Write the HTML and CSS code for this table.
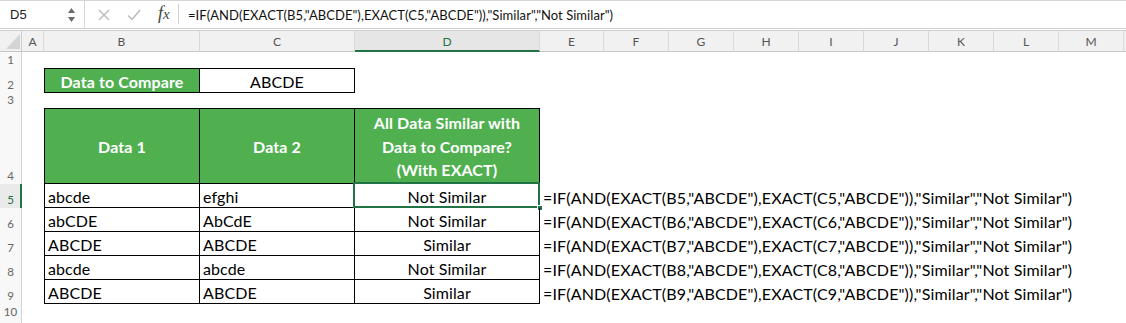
FILE: index.html
```html
<!DOCTYPE html>
<html>
<head>
<meta charset="utf-8">
<link rel="stylesheet" href="styles.css">
</head>
<body>
<div class="app">
  <div class="fbar">
    <div class="namebox">
      <span class="ref">D5</span>
      <svg class="spin" width="9" height="16" viewBox="0 0 9 16"><path d="M4.5 1 L8 6 L1 6 Z" fill="#6b6b6b"/><path d="M1 10 L8 10 L4.5 15 Z" fill="#6b6b6b"/></svg>
    </div>
    <div class="fbtns">
      <svg class="btn-x" width="14" height="14" viewBox="0 0 14 14"><path d="M2 2 L12 12 M12 2 L2 12" stroke="#b9b9b9" stroke-width="1.4" fill="none"/></svg>
      <svg class="btn-ok" width="14" height="12" viewBox="0 0 14 12"><path d="M1 6.5 L5 10.5 L13 1" stroke="#b9b9b9" stroke-width="1.4" fill="none"/></svg>
      <span class="fx"><i>f</i><i class="x">x</i></span>
    </div>
    <div class="formula">=IF(AND(EXACT(B5,"ABCDE"),EXACT(C5,"ABCDE")),"Similar","Not Similar")</div>
  </div>

  <div class="sheet">
    <!-- column headers -->
    <div class="corner"><svg width="14" height="15" viewBox="0 0 14 15"><path d="M14 0 L14 15 L0 15 Z" fill="#d4d4d4"/></svg></div>
    <div class="ch">A</div>
    <div class="ch">B</div>
    <div class="ch">C</div>
    <div class="ch active">D</div>
    <div class="ch">E</div>
    <div class="ch">F</div>
    <div class="ch">G</div>
    <div class="ch">H</div>
    <div class="ch">I</div>
    <div class="ch">J</div>
    <div class="ch">K</div>
    <div class="ch">L</div>
    <div class="ch">M</div>
    <div class="ch end"></div>

    <!-- row headers -->
    <div class="rh r1">1</div>
    <div class="rh r2">2</div>
    <div class="rh r3">3</div>
    <div class="rh r4">4</div>
    <div class="rh r5 active">5</div>
    <div class="rh r6">6</div>
    <div class="rh r7">7</div>
    <div class="rh r8">8</div>
    <div class="rh r9">9</div>
    <div class="rh r10">10</div>
    <div class="rh r11"></div>

    <!-- row 2 -->
    <div class="cell hd r2 cb top first">Data to Compare</div>
    <div class="cell r2 cc top center">ABCDE</div>

    <!-- row 4 -->
    <div class="cell hd r4 cb top first tall">Data 1</div>
    <div class="cell hd r4 cc top tall">Data 2</div>
    <div class="cell hd r4 cd top tall wrap">All Data Similar with<br>Data to Compare?<br>(With EXACT)</div>

    <!-- rows 5-9 -->
    <div class="cell r5 cb first">abcde</div>
    <div class="cell r5 cc">efghi</div>
    <div class="cell r5 cd center sel">Not Similar<span class="selbox"></span><span class="handle"></span></div>
    <div class="txt r5 ce">=IF(AND(EXACT(B5,"ABCDE"),EXACT(C5,"ABCDE")),"Similar","Not Similar")</div>

    <div class="cell r6 cb first">abCDE</div>
    <div class="cell r6 cc">AbCdE</div>
    <div class="cell r6 cd center">Not Similar</div>
    <div class="txt r6 ce">=IF(AND(EXACT(B6,"ABCDE"),EXACT(C6,"ABCDE")),"Similar","Not Similar")</div>

    <div class="cell r7 cb first">ABCDE</div>
    <div class="cell r7 cc">ABCDE</div>
    <div class="cell r7 cd center">Similar</div>
    <div class="txt r7 ce">=IF(AND(EXACT(B7,"ABCDE"),EXACT(C7,"ABCDE")),"Similar","Not Similar")</div>

    <div class="cell r8 cb first">abcde</div>
    <div class="cell r8 cc">abcde</div>
    <div class="cell r8 cd center">Not Similar</div>
    <div class="txt r8 ce">=IF(AND(EXACT(B8,"ABCDE"),EXACT(C8,"ABCDE")),"Similar","Not Similar")</div>

    <div class="cell r9 cb first">ABCDE</div>
    <div class="cell r9 cc">ABCDE</div>
    <div class="cell r9 cd center">Similar</div>
    <div class="txt r9 ce">=IF(AND(EXACT(B9,"ABCDE"),EXACT(C9,"ABCDE")),"Similar","Not Similar")</div>
  </div>
</div>
</body>
</html>
```

FILE: styles.css
```css
* { box-sizing: border-box; }
html, body { margin: 0; padding: 0; background: #fff; }
body { width: 1126px; height: 323px; overflow: hidden; font-family: Lato, "Open Sans", sans-serif; }

.fbar {
  height: 29px;
  display: flex;
  align-items: stretch;
  border-top: 1px solid #d6d6d6;
  border-bottom: 1px solid #cfcfcf;
  background: #fff;
}
.namebox {
  width: 85px;
  display: flex;
  align-items: center;
  justify-content: space-between;
  padding: 0 8px 0 10px;
  border-right: 1px solid #d6d6d6;
}
.ref { font-family: "Liberation Sans", Arial, sans-serif; font-size: 13px; color: #222; }
.spin { margin-top: 1px; }
.fbtns {
  width: 96px;
  display: flex;
  align-items: center;
  padding-left: 12px;
}
.btn-x { margin-right: 16px; }
.btn-ok { margin-right: 17px; }
.fx {
  font-family: "Liberation Serif", "Times New Roman", serif;
  font-style: italic;
  font-size: 18px;
  color: #444;
  margin-top: -1px;
  padding-right: 8px;
  border-right: 1px solid #d0d0d0;
  line-height: 18px;
  height: 20px;
}
.fx i { font-style: italic; }
.fx .x { font-size: 15px; }
.formula {
  flex: 1;
  display: flex;
  align-items: center;
  padding-left: 7px;
  font-size: 13px;
  letter-spacing: 0.05px;
  color: #111;
  white-space: nowrap;
}

.sheet {
  margin-top: 1px;
  display: grid;
  grid-template-columns: 22px 22px 156px 155px 185px 64px 65px 65px 65px 65px 65px 65px 65px 65px 2px;
  grid-template-rows: 22px 16px 25px 15px 76px 24px 24px 24px 24px 24px 16px 16px;
}

.corner {
  grid-column: 1; grid-row: 1;
  background: #f1f1f1;
  border-top: 1px solid #cfcfcf;
  border-right: 1px solid #cfcfcf;
  border-bottom: 1px solid #c6c6c6;
  display: flex; align-items: flex-end; justify-content: flex-end;
  padding: 0 1px 2px 0;
}
.ch {
  grid-row: 1;
  background: #f1f1f1;
  border-top: 1px solid #cfcfcf;
  border-right: 1px solid #d9d9d9;
  border-bottom: 1px solid #c6c6c6;
  display: flex; align-items: center; justify-content: center;
  font-size: 12px;
  color: #555;
  padding-top: 1px;
}
.ch.active {
  color: #217346;
  background: #e6e6e6;
  border-bottom: 2px solid #217346;
}
.ch.end { border-right: none; }

.rh {
  grid-column: 1;
  background: #f8f8f8;
  border-right: 1px solid #d2d2d2;
  display: flex; align-items: flex-end; justify-content: center;
  font-size: 11.5px;
  color: #666;
  padding-bottom: 2px;
}
.rh.active {
  color: #217346;
  background: #eaeaea;
  border-right: 2px solid #217346;
  padding-left: 1px;
}

.r1 { grid-row: 2; }
.r2 { grid-row: 3; }
.r3 { grid-row: 4; }
.r4 { grid-row: 5; }
.r5 { grid-row: 6; }
.r6 { grid-row: 7; }
.r7 { grid-row: 8; }
.r8 { grid-row: 9; }
.r9 { grid-row: 10; }
.r10 { grid-row: 11; }
.r11 { grid-row: 12; }

.cb { grid-column: 3; }
.cc { grid-column: 4; }
.cd { grid-column: 5; }
.ce { grid-column: 6 / 15; }

.cell {
  position: relative;
  border-right: 1px solid #000;
  border-bottom: 1px solid #000;
  display: flex;
  align-items: center;
  padding: 2px 3px 0 3px;
  font-size: 16px;
  letter-spacing: 0.1px;
  color: #000;
  white-space: nowrap;
}
.cell.first { border-left: 1px solid #000; }
.cell.top { border-top: 1px solid #000; }
.cell.center { justify-content: center; }
.cell.hd {
  background: #50b050;
  color: #fff;
  font-weight: 700;
  justify-content: center;
}
.cell.tall { padding-top: 1px; }
.cell.wrap {
  text-align: center;
  line-height: 23.5px;
  white-space: normal;
}

.selbox {
  position: absolute;
  top: -2px; left: -2px; right: -1px; bottom: -1px;
  border: 2px solid #217346;
  pointer-events: none;
}
.handle {
  position: absolute;
  right: -4px; bottom: -4px;
  width: 6px; height: 6px;
  background: #217346;
  border: 1px solid #fff;
}

.txt {
  display: flex;
  align-items: center;
  padding: 2px 0 0 3px;
  font-size: 16px;
  letter-spacing: 0.15px;
  color: #000;
  white-space: nowrap;
}
```
